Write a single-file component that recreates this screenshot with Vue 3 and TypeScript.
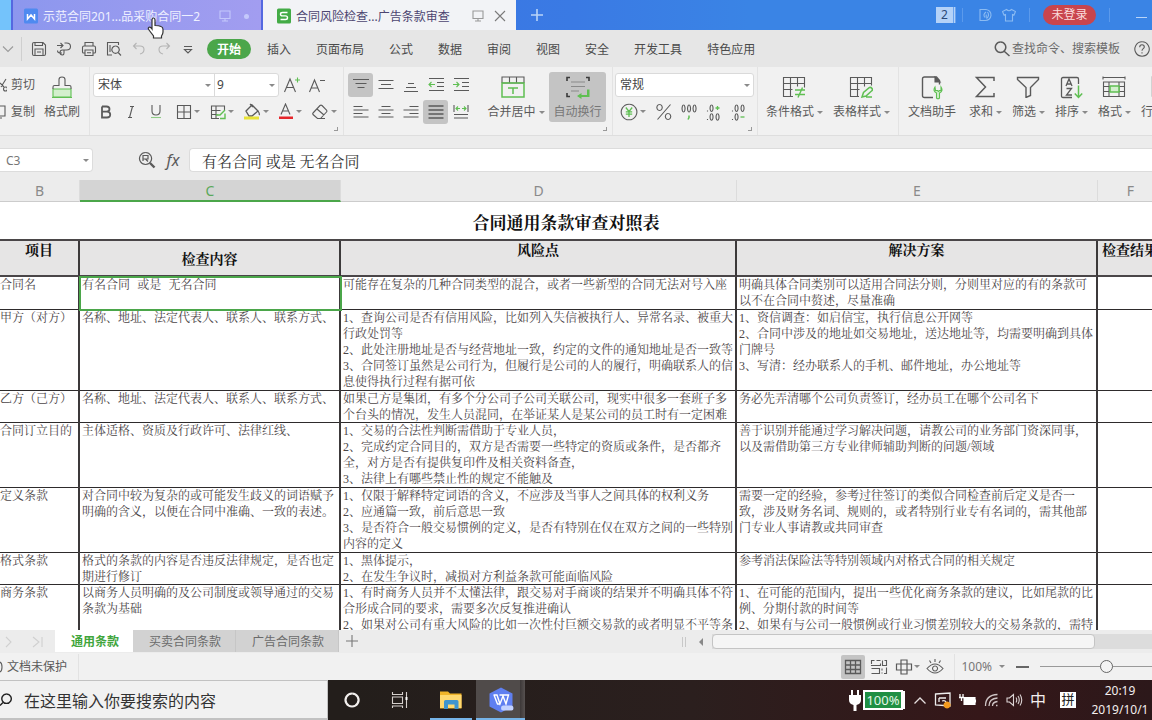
<script setup lang="ts">
import { h, ref } from 'vue'

interface Shape { d: string; s?: string; f?: string; w?: number }
interface IconDef { w: number; h: number; p: Shape[] }

const G = '#5fbf52'
const K = '#5a5a5a'

const icons: Record<string, IconDef> = {
  chevron: { w: 12, h: 8, p: [{ d: 'M1 1.5l5 5 5-5', s: '#9a9a9a' }] },
  save: { w: 16, h: 16, p: [{ d: 'M1.5 3q0-1.500 1.500-1.500h9l2.500 2.500v9q0 1.500-1.500 1.500h-10q-1.500 0-1.500-1.500zM4 1.500v3h7.500v-3M4 14v-6h8v6M6 11h4' }] },
  exportPdf: { w: 16, h: 16, p: [{ d: 'M1 4.500h6M4.500 2l2.500 2.500-2.500 2.500M8.500 2h2q4 0 4 3.500t-4 3.500h-2.500v3M6 12h-2q-2.500 0-2.500-2.500M8 9h-1.500q-2.500 0-2.500 2.500t2.500 2.500q1.500 0 1.500-2' }] },
  print: { w: 16, h: 16, p: [{ d: 'M4 5v-3.500h8v3.500M4 12h-1.500q-1 0-1-1v-4.500q0-1.500 1.500-1.500h10q1.500 0 1.500 1.500v4.500q0 1-1 1h-1.500M4 9h8v5.500h-8zM6 11.700h4' }] },
  preview: { w: 16, h: 16, p: [{ d: 'M6 14h-4.500v-12.500h11v2.500M15 14.500l-2.800-3M4 4v7' }, { d: 'M9.500 5a3.700 3.700 0 1 0 .1 0' }] },
  undo: { w: 16, h: 16, p: [{ d: 'M5.500 2l-3 3 3 3M3 5h6q4 0 4 3.500t-4 4.500', s: '#b4b4b4' }] },
  redo: { w: 16, h: 16, p: [{ d: 'M10.500 2l3 3-3 3M13 5h-6q-4 0-4 3.500t4 4.500', s: '#b4b4b4' }] },
  more: { w: 16, h: 16, p: [{ d: 'M3 5.500h8M3.500 8.500l3.500 3.500 3.500-3.500z' }] },
  search: { w: 16, h: 16, p: [{ d: 'M6.500 1a5.200 5.200 0 1 0 .1 0M10.500 10.500l5 4.500', w: 1.5 }] },
  help: { w: 16, h: 16, p: [{ d: 'M8 .8a7.200 7.200 0 1 0 .1 0M5.700 6.200q0-2.400 2.300-2.400t2.300 2.100c0 1.700-2.300 1.700-2.300 3.800M8 11.300v1.200' }] },
  cut: { w: 7, h: 14, p: [{ d: 'M6 1l-5 8M0 5l4 4M5.500 9a2 2 0 1 1-2 2 2 2 0 0 1 2-2' }] },
  copy: { w: 7, h: 14, p: [{ d: 'M0 1h5v10h-5M0 13h2' }] },
  painter: { w: 22, h: 22, p: [{ d: 'M2 13h18v8h-18zM1 21.500h20', s: G, f: '#d3efcd' }, { d: 'M2 13v-2q0-1.500 1.500-1.500h4.500v-6q0-2.500 3-2.500t3 2.500v6h4.500q1.500 0 1.500 1.500v2' }] },
  aPlus: { w: 18, h: 16, p: [{ d: 'M1.500 15l5.500-13 5.500 13M3.500 10.500h7' }, { d: 'M12 3h5M14.500 .5v5', s: G }] },
  aMinus: { w: 18, h: 16, p: [{ d: 'M1.500 15l5-12 5 12M3.500 11h6M12 3.500h5' }] },
  bold: { w: 14, h: 14, p: [{ d: 'M3 1.500h4.500q3 0 3 2.600t-3 2.600h-4.500M3 6.700h5q3.200 0 3.200 2.900t-3.200 2.900h-5zM3 1.500v11', w: 1.8 }] },
  italic: { w: 14, h: 14, p: [{ d: 'M6 1.500h4M4 12.500h4M8.500 1.500l-3 11' }] },
  underline: { w: 14, h: 15, p: [{ d: 'M3 1v6q0 4 4 4t4-4v-6' }, { d: 'M2 13.500h10', s: '#8ecb85' }] },
  border: { w: 16, h: 16, p: [{ d: 'M1.500 1.500h13v13h-13zM8 1.500v13M1.500 8h13' }] },
  tableFill: { w: 16, h: 16, p: [{ d: 'M9 14.500h-7.500v-12.500h13v4M1.500 6.500h9M1.500 10.500h6M6 2v12.500' }, { d: 'M6 11h4l5-5M10 14.500h5v-5', s: G, w: 1.400 }] },
  bucket: { w: 18, h: 17, p: [{ d: 'M3 8l6-6 6 6-6 5h-3zM7 1l3 3M15 8q2 3 1 4', w: 1.300 }, { d: 'M1 13.500h15v3h-15z', s: 'none', f: '#e8e337' }] },
  fontColor: { w: 16, h: 17, p: [{ d: 'M3 11.500l4.500-10.500 4.500 10.500M4.800 8h5.500' }, { d: 'M1 13.500h14v2.500h-14z', s: 'none', f: '#e5262b' }] },
  eraser: { w: 18, h: 16, p: [{ d: 'M2 9l7-7.500q1-.8 2 0l4.500 4.500q.8 1 0 2l-6 6.500h-3l-4.500-4q-.6-.7 0-1.500zM6 5l7 6M9 14.500h5' }] },
  alTop: { w: 18, h: 14, p: [{ d: 'M1 1.500h16M3.500 5.500h11M5.500 9.500h7' }] },
  alMid: { w: 18, h: 14, p: [{ d: 'M1.500 2.500h15M4 6.500h10M1.500 10.500h15' }] },
  alBot: { w: 18, h: 14, p: [{ d: 'M6 5.500h6M4 9.500h10M2 13.500h14' }] },
  indentL: { w: 18, h: 15, p: [{ d: 'M2 1.500h15M10 5.500h7M10 9.500h7M2 13.500h15' }, { d: 'M8 7.500h-6M4.500 5l-2.500 2.500 2.500 2.500', s: G }] },
  indentR: { w: 18, h: 15, p: [{ d: 'M2 1.500h15M10 5.500h7M10 9.500h7M2 13.500h15' }, { d: 'M1 7.500h6M4.500 5l2.500 2.500-2.500 2.500', s: G }] },
  left: { w: 18, h: 14, p: [{ d: 'M1.500 1.500h9M1.500 5h15M1.500 8.500h9M1.500 12h15' }] },
  center: { w: 18, h: 14, p: [{ d: 'M4.500 1.500h9M1.500 5h15M4.500 8.500h9M1.500 12h15' }] },
  right: { w: 18, h: 14, p: [{ d: 'M7.500 1.500h9M1.500 5h15M7.500 8.500h9M1.500 12h15' }] },
  justify: { w: 18, h: 14, p: [{ d: 'M1.500 1h15M1.500 5h15M1.500 9h15M1.500 13h15', w: 1.300 }] },
  spread: { w: 18, h: 15, p: [{ d: 'M2 1v7M16 1v7M2 10.500h14M2 14h14' }, { d: 'M4 4.500h4M6 2.500l-2 2 2 2M14 4.500h-4M12 2.500l2 2-2 2', s: G }] },
  merge: { w: 24, h: 22, p: [{ d: 'M1 7v-6h22v6M8.500 1v6M15.500 1v6M1 7h22' }, { d: 'M1 7h22v14h-22zM7 12h10M12 12v6', s: G, w: 1.500 }] },
  wrap: { w: 26, h: 24, p: [{ d: 'M5 1.500h-3v3.500M21 1.500h3v3.500M2 17v3.500h3', w: 1.600, s: '#3a3a3a' }, { d: 'M6 6h14M6 10.500h14M6 15h8', s: '#8a8a8a' }, { d: 'M22 13.500h2.500v7.500h-8v2l-4.500-3 4.500-3v2h5.500z', f: G, s: 'none' }] },
  currency: { w: 18, h: 18, p: [{ d: 'M9 1.200a7.800 7.800 0 1 0 .1 0' }, { d: 'M5.800 4.500l3.200 4 3.200-4M9 8.500v5.500M5.800 8.800h6.400M5.800 11.200h6.400', s: G, w: 1.300 }] },
  percent: { w: 18, h: 18, p: [{ d: 'M15.500 1.500l-13 15M4.500 1.500a2.700 3 0 1 0 .1 0M13 10.500a2.700 3 0 1 0 .1 0' }] },
  thousands: { w: 18, h: 18, p: [{ d: 'M3.500 2a1.500 3.500 0 1 0 .1 0M9 2a1.500 3.500 0 1 0 .1 0M14.500 2a1.500 3.500 0 1 0 .1 0' }, { d: 'M9 12.500v2l-1 2', s: G, w: 1.500 }] },
  decUp: { w: 18, h: 18, p: [{ d: 'M2.500 7.500v1M6.500 2a1.500 3.200 0 1 0 .1 0M2.500 16v1M6.500 10.700a1.500 3.200 0 1 0 .1 0M12.500 10.700a1.500 3.200 0 1 0 .1 0' }, { d: 'M10.500 5h4M12.500 3v4', s: G, w: 1.300 }] },
  decDown: { w: 18, h: 18, p: [{ d: 'M2.500 7.500v1M6.500 2a1.500 3.200 0 1 0 .1 0M12.500 2a1.500 3.200 0 1 0 .1 0M2.500 16v1M6.500 10.700a1.500 3.200 0 1 0 .1 0' }, { d: 'M10.500 14h4', s: G, w: 1.300 }] },
  condFmt: { w: 24, h: 22, p: [{ d: 'M11 20.500h-9.500v-19h21v10M1.500 7.500h21M1.500 13.500h9M8.500 1.500v19M15.500 1.500v9' }, { d: 'M13 14h10M13 18.500h10M20.500 11.500l-4.500 10', s: G, w: 1.400 }] },
  tblStyle: { w: 24, h: 22, p: [{ d: 'M10 20.500h-8.500v-19h21v8M1.500 7.500h21M1.500 13.500h9M8.500 1.500v19M15.500 1.500v9' }, { d: 'M13 21l1.500-4.500 6-5q1.500-.5 2.500 1t-.5 2.500l-5.500 5zM17 21h6', s: G, w: 1.500 }] },
  docHelp: { w: 24, h: 24, p: [{ d: 'M13 21.500h-8.500q-2 0-2-2v-16.500q0-2 2-2h12l3 3.500v4', w: 1.400 }, { d: 'M15 1v5h5z', f: K }, { d: 'M15 11q-2.500 4 1.500 6v5q1.500 1.500 3 0v-5q4-2 1.500-6v3.500h-1.500l-1 1-1-1h-2z', s: G, f: '#d3efcd' }] },
  sum: { w: 22, h: 22, p: [{ d: 'M20 5v-3.500h-17.500l9 9.500-9 9.500h17.500v-3.500', w: 1.500 }] },
  filter: { w: 24, h: 22, p: [{ d: 'M1.500 1.500h21v2l-8 8v8l-4.500 2v-10l-8.500-8z', w: 1.400 }] },
  sort: { w: 24, h: 23, p: [{ d: 'M13 21.500h-9q-1.500 0-1.500-1.500v-17q0-1.500 1.500-1.500h14q1.500 0 1.500 1.500v5M7 10l3-7 3 7M8 8h4M7.500 12.500h5l-5 6.500h5.500', w: 1.300 }, { d: 'M19.500 9.500v12M15.800 17.500l3.700 4 3.700-4', s: G, w: 1.500 }] },
  format: { w: 24, h: 22, p: [{ d: 'M1 1.500h22M1 .5v3M23 .5v3M1.500 6h21v14.500h-21zM1.500 10.500h21M1.500 15.500h21M7 6v14M17 6v14' }, { d: 'M8 10h9v6h-9z', s: G, f: '#d3efcd', w: 1.500 }] },
  rows: { w: 24, h: 22, p: [{ d: 'M1.500 1h20v19h-20zM1.500 7h20M8 1v19', w: 1.400 }] },
  goTo: { w: 18, h: 18, p: [{ d: 'M7.500 1.500a6 6 0 1 0 .1 0M5 10v-5.500h5v3.500h-5M7.500 8l2.500 2.500', w: 1.200 }, { d: 'M12 12l4.500 4.500', w: 2.400 }] },
  monitor: { w: 14, h: 12, p: [{ d: 'M2 1h10v7.500h-10zM7 8.500v2.500M4 11h6', s: 'currentColor' }] },
  close: { w: 12, h: 12, p: [{ d: 'M1 1l10 10M11 1l-10 10', s: '#7a7a7a' }] },
  plusWhite: { w: 12, h: 12, p: [{ d: 'M6 0v12M0 6h12', s: '#b9d4f8', w: 1.600 }] },
  wTab: { w: 14, h: 16, p: [{ d: 'M1.500 .5h11q1.500 0 1.500 1.500v12q0 1.500-1.500 1.500h-11q-1.500 0-1.500-1.500v-12q0-1.500 1.500-1.500z', f: '#4f8af0', s: 'none' }, { d: 'M3.500 6v5l3.500-4 3.500 4v-5', s: '#fff', w: 1.500 }] },
  sTab: { w: 14, h: 16, p: [{ d: 'M1.500 .5h11q1.500 0 1.500 1.500v12q0 1.500-1.500 1.500h-11q-1.500 0-1.500-1.500v-12q0-1.500 1.500-1.500z', f: '#43ab46', s: 'none' }, { d: 'M10.500 4.500h-5q-2 0-2 1.700t2 1.700h3q2 0 2 1.800t-2 1.800h-5', s: '#fff', w: 1.400 }] },
  task: { w: 14, h: 14, p: [{ d: 'M8 1.500h-6v11h5M8 1.500a5.500 5.500 0 1 1-1 11M8 4q-3.500 2.500-1 5.500M9.500 4q2.500 3.500-1 6.500M8.200 6.500v3', s: '#8bbbf2' }] },
  shirt: { w: 14, h: 14, p: [{ d: 'M4.500 1.500q2.500 2.500 5 0l4 2-1.500 3.500-1.500-.5v6.500h-7v-6.500l-1.500.5-1.500-3.500z', s: '#8bbbf2' }] },
  normalView: { w: 18, h: 16, p: [{ d: 'M1.500 1.500h15v13h-15zM1.500 6h15M1.500 10.500h15M6.500 1.500v13M11.500 1.500v13', w: 1.300 }] },
  pageView: { w: 18, h: 16, p: [{ d: 'M1.500 5v-3.500h3M6.500 1.500h4M1.500 7v-.5h9v-2M1.500 9.500h8v5h-8M12.500 1.500v5h4v-5h-2M16.500 8.500v6h-2.500M12 9.500v2M12 13.500v1' }] },
  splitView: { w: 18, h: 16, p: [{ d: 'M6 1h6v14h-6zM1.500 5h15v6h-15z', w: 1.200 }] },
  eye: { w: 18, h: 17, p: [{ d: 'M1 10.500q8-9 16 0-8 9-16 0zM9 8a2.500 2.500 0 1 0 .1 0M9 1v3M3.500 2.500l1.500 2.500M14.500 2.500l-1.500 2.500' }] },
  navNext: { w: 8, h: 12, p: [{ d: 'M1 1l5 5-5 5', s: '#d0d0d0' }] },
  navLast: { w: 12, h: 12, p: [{ d: 'M1 1l6 5-6 5M10 1v10', s: '#d0d0d0' }] },
  addSheet: { w: 14, h: 14, p: [{ d: 'M7 1v12M1 7h12', s: '#777' }] },
  shield: { w: 3, h: 12, p: [{ d: 'M0 1q2 1 2 5t-2 5' }] },
  taskSearch: { w: 12, h: 16, p: [{ d: 'M6.500 2a4.700 4.700 0 1 0 .1 0M3 10.500l-3 3', s: '#222', w: 1.400 }] },
  cortana: { w: 18, h: 18, p: [{ d: 'M9 2.500a6.500 6.500 0 1 0 .1 0', s: '#f3f0ee', w: 2.200 }] },
  taskView: { w: 18, h: 16, p: [{ d: 'M1.500 0v2.500h10v-2.500M1.500 5h10v6.500h-10zM1.500 16v-2h10v2M15.500 0v16', s: '#d6d0cd' }, { d: 'M14.500 5h2v3h-2z', s: 'none', f: '#fff' }] },
  folder: { w: 22, h: 20, p: [{ d: 'M0 1.500h8l2 2h11.500v15h-21.500z', s: 'none', f: '#f0b429' }, { d: 'M0 5h21.500v13h-21.500z', s: 'none', f: '#ffd970' }, { d: 'M4 19v-7.500q0-1.500 1.500-1.500h11.500q1.500 0 1.500 1.500v7.500h-4v-4.500h-6.500v4.500z', s: 'none', f: '#3f95cf' }] },
  wps: { w: 26, h: 26, p: [{ d: 'M13 .5l11.500 6v13l-11.500 6-11.500-6v-13z', s: 'none', f: '#5f7ff0' }, { d: 'M5.500 8h3.500l3 9 3-8 3 8 2.500-9h-9M6 8l3.500 9h2', s: '#fff', w: 1.400 }, { d: 'M15 18.500h8.500q2 0 2 2.500t-2 2.500h-8.500q-2 0-2-2.500t2-2.500z', s: 'none', f: '#c3d2ff' }] },
  plug: { w: 14, h: 22, p: [{ d: 'M4 1v6M10 1v6', s: '#fff', w: 2 }, { d: 'M1 6h12v5q0 4-4.500 5v6h-3v-6q-4.500-1-4.500-5z', s: 'none', f: '#fff' }] },
  trayUp: { w: 14, h: 9, p: [{ d: 'M1.500 7.500l5.500-5.500 5.500 5.500', s: '#e5dede', w: 1.300 }] },
  trayApp: { w: 18, h: 17, p: [{ d: 'M1.500 2l14.500-1v13l-14.500-1zM5 6h7M5 6v4M8 9q3-1 4 1', s: '#eee', w: 1.300 }, { d: 'M13 9.500a3.500 3.500 0 1 0 .1 0', s: 'none', f: '#f39a1f' }] },
  trayBat: { w: 18, h: 12, p: [{ d: 'M5 3.500h11v7h-11zM16.500 5.500v3', s: '#fff', f: '#fff' }, { d: 'M1 0v3M4 0v3M0 3.500h5M2.500 4v3', s: '#fff', w: 1.300 }] },
  wifi: { w: 15, h: 14, p: [{ d: 'M1.500 13q0-11 12-11.500M5 13q0-7.500 8.500-8M8.500 13q0-4 5-4.500M12 12.500h1.500', s: '#cfc5c5', w: 1.300 }] },
  volume: { w: 17, h: 14, p: [{ d: 'M1 5h2.500l4-3.500v11l-4-3.500h-2.500zM10 4.500q1.500 2.500 0 5M12 3q2.500 4 0 8M14 1.500q3.500 5.500 0 11', s: '#dcd4d4' }] },
  cursor: { w: 18, h: 22, p: [{ d: 'M5 12v-9q0-2 1.500-2t1.500 2v5.500q4 .2 6 1 2 .5 2 3v2.500q0 2-1.500 4v2h-8v-2l-4.500-6q-1.500-2 0-2.700t3 1.700z', f: '#fff', s: '#333', w: 1.200 }] },
}

const Icon = (props: { name: string }) => {
  const def = icons[props.name]
  return h('svg', { width: def.w, height: def.h, viewBox: `0 0 ${def.w} ${def.h}`, 'aria-hidden': 'true', style: { flex: 'none', display: 'block' } },
    def.p.map((p) => h('path', { d: p.d, fill: p.f ?? 'none', stroke: p.s ?? K, 'stroke-width': p.w ?? 1.1 })))
}
Icon.props = ['name']

const quick = [
  ['save', '保存'], ['exportPdf', '输出为PDF'], ['print', '打印'], ['preview', '打印预览'],
  ['undo', '撤销'], ['redo', '恢复'], ['more', '自定义'],
]
const menus = ['插入', '页面布局', '公式', '数据', '审阅', '视图', '安全', '开发工具', '特色应用']
const plainFmt = [['bold', '加粗'], ['italic', '倾斜'], ['underline', '下划线']]
const dropFmt = [['border', '边框'], ['tableFill', '绘制边框'], ['bucket', '填充颜色'], ['fontColor', '字体颜色'], ['eraser', '清除']]
const alignTop = ['alTop', 'alMid', 'alBot', 'indentL', 'indentR']
const alignBottom = ['left', 'center', 'right', 'justify', 'spread']
const numFmt = ['percent', 'thousands', 'decUp', 'decDown']
const styleBtns = [['condFmt', '条件格式'], ['tblStyle', '表格样式']]
const editBtns = [['sum', '求和'], ['filter', '筛选'], ['sort', '排序'], ['format', '格式'], ['rows', '行和列']]

const columns = [
  { id: 'B', w: 80 }, { id: 'C', w: 261 }, { id: 'D', w: 396 }, { id: 'E', w: 361 }, { id: 'F', w: 66 },
]
const heads = ['项目', '检查内容', '风险点', '解决方案', '检查结果']
const formula = ref('有名合同 或是 无名合同')

interface Row { h: number; cells: string[][] }
const rows: Row[] = [
  { h: 33, cells: [['合同名'], ['有名合同 或是 无名合同'],
    ['可能存在复杂的几种合同类型的混合，或者一些新型的合同无法对号入座'],
    ['明确具体合同类别可以适用合同法分则，分则里对应的有的条款可', '以不在合同中赘述，尽量准确']] },
  { h: 81, cells: [['甲方（对方）'], ['名称、地址、法定代表人、联系人、联系方式、'],
    ['1、查询公司是否有信用风险，比如列入失信被执行人、异常名录、被重大', '行政处罚等', '2、此处注册地址是否与经营地址一致，约定的文件的通知地址是否一致等', '3、合同签订虽然是公司行为，但履行是公司的人的履行，明确联系人的信', '息使得执行过程有据可依'],
    ['1、资信调查：如启信宝，执行信息公开网等', '2、合同中涉及的地址如交易地址，送达地址等，均需要明确到具体', '门牌号', '3、写清：经办联系人的手机、邮件地址，办公地址等']] },
  { h: 32, cells: [['乙方（己方）'], ['名称、地址、法定代表人、联系人、联系方式、'],
    ['如果己方是集团，有多个分公司子公司关联公司，现实中很多一套班子多', '个台头的情况，发生人员混同，在举证某人是某公司的员工时有一定困难'],
    ['务必先弄清哪个公司负责签订，经办员工在哪个公司名下']] },
  { h: 65, cells: [['合同订立目的'], ['主体适格、资质及行政许可、法律红线、'],
    ['1、交易的合法性判断需借助于专业人员，', '2、完成约定合同目的，双方是否需要一些特定的资质或条件，是否都齐', '全，对方是否有提供复印件及相关资料备查，', '3、法律上有哪些禁止性的规定不能触及'],
    ['善于识别并能通过学习解决问题，请教公司的业务部门资深同事，', '以及需借助第三方专业律师辅助判断的问题/领域']] },
  { h: 65, cells: [['定义条款'], ['对合同中较为复杂的或可能发生歧义的词语赋予', '明确的含义，以便在合同中准确、一致的表述。'],
    ['1、仅限于解释特定词语的含义，不应涉及当事人之间具体的权利义务', '2、应通篇一致，前后意思一致', '3、是否符合一般交易惯例的定义，是否有特别在仅在双方之间的一些特别', '内容的定义'],
    ['需要一定的经验，参考过往签订的类似合同检查前后定义是否一', '致，涉及财务名词、规则的，或者特别行业专有名词的，需其他部', '门专业人事请教或共同审查']] },
  { h: 32, cells: [['格式条款'], ['格式的条款的内容是否违反法律规定，是否也定', '期进行修订'],
    ['1、黑体提示，', '2、在发生争议时，减损对方利益条款可能面临风险'],
    ['参考消法保险法等特别领域内对格式合同的相关规定']] },
  { h: 65, cells: [['商务条款'], ['以商务人员明确的及公司制度或领导通过的交易', '条款为基础'],
    ['1、有时商务人员并不太懂法律，跟交易对手商谈的结果并不明确具体不符', '合形成合同的要求，需要多次反复推进确认', '2、如果对公司有重大风险的比如一次性付巨额交易款的或者明显不平等条'],
    ['1、在可能的范围内，提出一些优化商务条款的建议，比如尾款的比', '例、分期付款的时间等', '2、如果有与公司一般惯例或行业习惯差别较大的交易条款的，需特']] },
]
</script>

<template>
  <div class="app">
    <header class="titlebar">
      <div class="home-tab"></div>
      <div class="doc-tab">
        <Icon name="wTab" /><span class="doc-name">示范合同201...品采购合同一2</span>
        <Icon name="monitor" /><i class="dot"></i>
      </div>
      <div class="doc-tab active">
        <Icon name="sTab" /><span class="doc-name">合同风险检查...广告条款审查</span>
        <Icon name="monitor" /><button class="bare" aria-label="关闭"><Icon name="close" /></button>
      </div>
      <button class="bare new-tab" aria-label="新建"><Icon name="plusWhite" /></button>
      <div class="title-right">
        <span class="count">2</span><i class="tsep"></i>
        <button class="bare" aria-label="待办"><Icon name="task" /></button>
        <button class="bare" aria-label="皮肤"><Icon name="shirt" /></button>
        <i class="tsep wide"></i>
        <button class="login">未登录</button>
        <i class="tsep wide"></i>
        <button class="bare minimize" aria-label="最小化"></button>
      </div>
      <div class="cursor"><Icon name="cursor" /></div>
    </header>

    <nav class="menubar">
      <button class="bare file-chev" aria-label="文件"><Icon name="chevron" /></button>
      <div class="quick">
        <button v-for="q in quick" :key="q[0]" class="bare" :aria-label="q[1]"><Icon :name="q[0]" /></button>
      </div>
      <button class="start">开始</button>
      <div class="menus"><button v-for="m in menus" :key="m" class="bare">{{ m }}</button></div>
      <button class="bare find"><Icon name="search" />查找命令、搜索模板</button>
      <button class="bare help" aria-label="帮助"><Icon name="help" /></button>
    </nav>

    <section class="ribbon">
      <div class="group clip">
        <div class="stack">
          <button class="bare clip-btn"><Icon name="cut" />剪切</button>
          <button class="bare clip-btn"><Icon name="copy" />复制</button>
        </div>
        <button class="bare big"><Icon name="painter" /><span>格式刷</span></button>
      </div>
      <div class="group font corner">
        <div class="line">
          <div class="combo">
            <span class="pick family"><select aria-label="字体"><option>宋体</option></select></span>
            <span class="pick size"><select aria-label="字号"><option>9</option></select></span>
          </div>
          <button class="bare tool" aria-label="增大字号"><Icon name="aPlus" /></button>
          <button class="bare tool" aria-label="减小字号"><Icon name="aMinus" /></button>
        </div>
        <div class="line">
          <button v-for="b in plainFmt" :key="b[0]" class="bare tool" :aria-label="b[1]"><Icon :name="b[0]" /></button>
          <button v-for="b in dropFmt" :key="b[0]" class="bare drop" :aria-label="b[1]"><Icon :name="b[0]" /><i class="caret"></i></button>
        </div>
      </div>
      <div class="group align corner">
        <div class="stack">
          <div class="line"><button v-for="a in alignTop" :key="a" class="bare tool" :class="{ on: a === 'alTop' }" :aria-label="a"><Icon :name="a" /></button></div>
          <div class="line"><button v-for="a in alignBottom" :key="a" class="bare tool" :class="{ on: a === 'justify' }" :aria-label="a"><Icon :name="a" /></button></div>
        </div>
        <button class="bare big merge"><Icon name="merge" /><span>合并居中<i class="caret"></i></span></button>
        <button class="bare big wrap on"><Icon name="wrap" /><span>自动换行</span></button>
      </div>
      <div class="group number corner">
        <div class="line"><span class="pick general"><select aria-label="数字格式"><option>常规</option></select></span></div>
        <div class="line">
          <button class="bare drop" aria-label="货币"><Icon name="currency" /><i class="caret"></i></button>
          <button v-for="n in numFmt" :key="n" class="bare tool" :aria-label="n"><Icon :name="n" /></button>
        </div>
      </div>
      <div class="group styles">
        <button v-for="s in styleBtns" :key="s[0]" class="bare big"><Icon :name="s[0]" /><span>{{ s[1] }}<i class="caret"></i></span></button>
      </div>
      <div class="group edit">
        <button class="bare big helper"><Icon name="docHelp" /><span>文档助手</span></button>
        <button v-for="s in editBtns" :key="s[0]" class="bare big"><Icon :name="s[0]" /><span>{{ s[1] }}<i class="caret"></i></span></button>
      </div>
    </section>

    <section class="formula-bar">
      <span class="pick name-box"><input value="C3" aria-label="名称框" /></span>
      <button class="bare goto" aria-label="浏览公式结果"><Icon name="goTo" /></button>
      <button class="bare fx" aria-label="插入函数">fx</button>
      <input v-model="formula" class="formula" aria-label="编辑栏" />
    </section>

    <main class="sheet">
      <table>
        <colgroup><col v-for="c in columns" :key="c.id" :style="{ width: c.w + 'px' }" /></colgroup>
        <thead>
          <tr class="letters"><th v-for="c in columns" :key="c.id" :class="{ picked: c.id === 'C' }">{{ c.id }}</th></tr>
        </thead>
        <tbody>
          <tr class="title"><td colspan="5">合同通用条款审查对照表</td></tr>
          <tr class="heads"><td v-for="(t, i) in heads" :key="t" :class="{ low: i === 1 }">{{ t }}</td></tr>
          <tr v-for="(r, ri) in rows" :key="ri" class="data" :style="{ height: r.h + 'px' }">
            <td v-for="(c, ci) in r.cells" :key="ci" :class="{ selected: ri === 0 && ci === 1 }">
              <div v-for="(line, li) in c" :key="li">{{ line }}</div>
            </td>
            <td></td>
          </tr>
        </tbody>
      </table>
    </main>

    <div class="sheet-tabs">
      <div class="nav"><Icon name="navNext" /><Icon name="navLast" /></div>
      <button class="bare stab current">通用条款</button>
      <button class="bare stab">买卖合同条款</button>
      <button class="bare stab">广告合同条款</button>
      <button class="bare add" aria-label="新建工作表"><Icon name="addSheet" /></button>
      <div class="scroll"><i class="grip"></i><i class="arrow"></i><div class="track"><div class="thumb"></div></div></div>
    </div>

    <footer class="status">
      <span class="protect"><Icon name="shield" />文档未保护</span>
      <div class="views">
        <button class="bare view on" aria-label="普通视图"><Icon name="normalView" /></button>
        <button class="bare view" aria-label="分页预览"><Icon name="pageView" /></button>
        <button class="bare view" aria-label="阅读模式"><Icon name="splitView" /><i class="caret"></i></button>
        <button class="bare view" aria-label="护眼模式"><Icon name="eye" /></button>
      </div>
      <button class="bare zoom">100%<i class="caret"></i></button>
      <button class="bare minus" aria-label="缩小"></button>
      <input class="slider" type="range" min="0" max="100" value="50" aria-label="缩放" />
    </footer>

    <div class="taskbar">
      <label class="task-search"><Icon name="taskSearch" /><input placeholder="在这里输入你要搜索的内容" aria-label="搜索" /></label>
      <button class="bare tb" aria-label="Cortana"><Icon name="cortana" /></button>
      <button class="bare tb" aria-label="任务视图"><Icon name="taskView" /></button>
      <button class="bare tb running" aria-label="文件资源管理器"><Icon name="folder" /></button>
      <button class="bare tb running front" aria-label="WPS"><Icon name="wps" /></button>
      <div class="tray">
        <Icon name="plug" /><span class="battery">100%</span>
        <Icon name="trayUp" /><Icon name="trayApp" /><Icon name="trayBat" /><Icon name="wifi" /><Icon name="volume" />
        <span class="ime">中</span><span class="pinyin">拼</span>
      </div>
      <div class="clock"><span>20:19</span><span>2019/10/1</span></div>
    </div>
  </div>
</template>

<style>
body { margin: 0; overflow: hidden; }
</style>

<style scoped>
.app { height: 100vh; display: flex; flex-direction: column; overflow: hidden; font: 12px/16px "Noto Sans", "Noto Sans CJK SC", sans-serif; color: #5a5a5a; background: #fff; }
.app > * { flex: none; }
.bare { border: 0; padding: 0; margin: 0; background: none; font: inherit; color: inherit; display: flex; align-items: center; justify-content: center; white-space: nowrap; flex: none; }
.caret { display: inline-block; border: 3px solid transparent; border-top-color: #8a8a8a; border-bottom: 0; flex: none; }

.titlebar { position: relative; height: 30px; display: flex; background: linear-gradient(90deg, #3b6fe0, #3a7ae4 50%, #3a84e5 65%); }
.home-tab { width: 11px; background: #74c3fb; }
.doc-tab { width: 252px; box-sizing: border-box; display: flex; align-items: center; padding: 2px 12px 0 11px; background: linear-gradient(90deg, #8c97ee, #a29df0); border: solid #5468e0; border-width: 0 2px 0 2px; color: #c4c8fb; }
.doc-name { margin: 2px auto 0 5px; color: #eef0ff; white-space: nowrap; }
.dot { width: 5px; height: 5px; border-radius: 3px; background: #c4c8fb; margin: 0 0 0 12px; }
.doc-tab.active { background: #f2f3f6; border: 0; width: 253px; color: #999; padding-left: 14px; padding-right: 10px; }
.active .doc-name { color: #4c4570; }
.active .bare { margin-left: 9px; }
.new-tab { width: 42px; }
.title-right { margin-left: auto; display: flex; align-items: center; }
.count { width: 17px; height: 16px; background: #b4d2f8; border-right: 3px double #6aa3ee; color: #2c4a78; text-align: center; margin-right: 6px; }
.tsep { width: 1px; height: 14px; background: #5b9aec; margin-right: 15px; }
.title-right .bare + .bare { margin-left: 10px; }
.tsep.wide { margin: 0 13px 0 13px; }
.login { border: 0; width: 53px; height: 20px; border-radius: 10px; background: #c9454d; color: #fbdcdc; font: inherit; padding: 0; }
.title-right .minimize { width: 11px; height: 1px; background: #b9d4f8; margin: 4px 5px 0 13px; }
.cursor { position: absolute; left: 147px; top: 17px; z-index: 2; }

.menubar { height: 37px; display: flex; align-items: center; background: #e6e6e6; }
.file-chev { width: 22px; height: 24px; padding-right: 6px; box-sizing: border-box; border-right: 1px solid #cfcfcf; }
.quick { display: flex; gap: 9px; margin-left: 9px; }
.start { margin-left: 10px; width: 44px; height: 20px; border: 0; border-radius: 10px; padding: 0; background: #4ba64a; color: #fff; font: bold 12px/20px "Noto Sans CJK SC", sans-serif; }
.menus { display: flex; gap: 25px; margin: 2px 0 0 16px; color: #4a4a4a; }
.find { margin-left: auto; gap: 2px; color: #6a6a6a; }
.help { margin: 0 2px 0 14px; }

.ribbon { height: 69px; display: flex; background: #f1f1f1; border-bottom: 1px solid #dedede; box-sizing: border-box; overflow: hidden; }
.group { display: flex; flex: none; border-right: 1px solid #e3e3e3; box-sizing: border-box; padding-top: 5px; position: relative; }
.corner::after { content: ""; position: absolute; right: 5px; bottom: 4px; width: 3px; height: 3px; border: solid #999; border-width: 0 1px 1px 0; }
.stack, .font, .number { display: flex; flex-direction: column; gap: 2px; }
.line { display: flex; height: 25px; align-items: center; }
.clip { width: 90px; gap: 9px; }
.clip-btn { height: 25px; gap: 4px; }
.big { flex-direction: column; justify-content: flex-start; height: 50px; padding-top: 4px; box-sizing: border-box; border-radius: 3px; }
.big span { margin-top: auto; line-height: 20px; display: flex; align-items: center; gap: 3px; }
.font { width: 254px; padding-left: 3px; }
.combo { display: flex; width: 186px; height: 24px; box-sizing: border-box; background: #fff; border: 1px solid #dadada; border-radius: 3px; }
.pick { position: relative; display: flex; align-items: center; }
.pick::after { content: ""; position: absolute; right: 3px; top: 10px; border: 3px solid transparent; border-top-color: #8a8a8a; border-bottom: 0; pointer-events: none; }
.pick select, .pick input { appearance: none; border: 0; background: none; font: inherit; color: #444; padding: 0 0 0 4px; width: 100%; height: 100%; outline: 0; box-sizing: border-box; }
.family { flex: 1; border-right: 1px solid #dadada; }
.size { width: 63px; }
.size select { padding-left: 2px; }
.tool { width: 25px; height: 24px; border-radius: 3px; }
.tool + .drop { margin-left: 3px; }
.drop { width: 34px; height: 24px; gap: 2px; }
.on { background: #c4c4c4; }
.align { width: 269px; padding-left: 4px; }
.merge { width: 56px; margin-left: 12px; }
.merge .caret { margin-right: -6px; }
.wrap { width: 57px; margin-left: 8px; color: #777; }
.number { width: 145px; padding-left: 2px; }
.general { width: 139px; height: 24px; box-sizing: border-box; background: #fff; border: 1px solid #dadada; border-radius: 3px; }
.number .drop { width: 36px; }
.styles { width: 141px; padding-left: 8px; gap: 10px; }
.styles .big svg, .edit .big svg { margin-right: 1px; }
.edit { padding-left: 9px; gap: 10px; border: 0; }
.edit .helper { margin-right: 3px; }

.formula-bar { height: 44px; display: flex; align-items: center; background: #ececec; box-sizing: border-box; padding-top: 4px; }
.name-box { width: 93px; height: 24px; box-sizing: border-box; background: #fff; border: 1px solid #dcdcdc; border-left: 0; border-radius: 0 4px 4px 0; }
.name-box input { padding-left: 6px; color: #777; }
.goto { margin-left: 45px; }
.fx { margin-left: 9px; width: 16px; font: italic 16px/20px "Noto Sans", sans-serif; }
.formula { flex: 1; min-width: 0; height: 24px; box-sizing: border-box; margin-left: 8px; padding: 0 12px; border: 1px solid #dcdcdc; border-right: 0; border-radius: 4px 0 0 4px; background: #fff; font: 15px/20px "Liberation Serif", "Noto Serif CJK SC", "Noto Sans CJK SC", serif; color: #333; outline: 0; }

.app .sheet { flex: 1 1 0; min-height: 0; overflow: hidden; background: linear-gradient(#ececec 21px, #ccc 21px, #ccc 22px, #fff 22px); }
table { border-collapse: separate; border-spacing: 0; table-layout: fixed; width: 1164px; }
td { padding: 0; vertical-align: top; }
.letters th { height: 22px; box-sizing: border-box; padding: 0; background: #ececec; border-bottom: 1px solid #ccc; border-right: 1px solid #dcdcdc; font-weight: 400; font-size: 14px; line-height: 20px; color: #8a8a8a; }
.letters th.picked { background: #d4d4d4; color: #5aa85a; border-bottom: 2px solid #4ba64a; line-height: 19px; }
.title td { height: 39px; padding: 6px 32px 0 0; box-sizing: border-box; border-bottom: 2px solid #4a4648; text-align: center; vertical-align: middle; color: #111; font: bold 17px/24px "Liberation Serif", "Noto Serif CJK SC", "Noto Sans CJK SC", serif; }
.heads td { height: 36px; box-sizing: border-box; background: #e6e5e5; border-bottom: 2px solid #4a4648; border-right: 2px solid #3c393a; text-align: center; white-space: nowrap; color: #111; font: bold 14px/20px "Liberation Serif", "Noto Serif CJK SC", "Noto Sans CJK SC", serif; }
.heads td.low { vertical-align: bottom; line-height: 30px; }
.data td { box-shadow: inset 0 -1px #2e2b2c; border-right: 2px solid #3c393a; padding-left: 2px; white-space: nowrap; color: #4c4648; font: 12px/16px "Liberation Serif", "Noto Serif CJK SC", "Noto Sans CJK SC", serif; }
.data td:first-child { padding-left: 0; }
.data td.selected { outline: 2px solid #4ba64a; outline-offset: -1px; box-shadow: none; padding-top: 1px; font-family: "Liberation Mono", "Noto Serif CJK SC", "Noto Sans CJK SC", monospace; }

.sheet-tabs { height: 23px; display: flex; background: #ececec; }
.nav { width: 55px; display: flex; align-items: center; gap: 19px; padding-left: 5px; box-sizing: border-box; }
.stab { width: 103px; height: 22px; background: #d2d2d2; border-right: 1px solid #c6c6c6; box-sizing: border-box; color: #6a6a6a; padding: 2px 0 0 2px; }
.stab.current { width: 78px; background: #fff; color: #3fa53c; font-weight: 700; border: 0; }
.add { width: 26px; height: 21px; }
.scroll { margin-left: auto; width: 470px; display: flex; align-items: center; }
.grip { width: 2px; height: 10px; border: solid #c8c8c8; border-width: 0 1px; margin-right: 6px; }
.arrow { border: 4px solid transparent; border-right-color: #888; border-left: 0; padding: 0; margin: 0 9px 0 7px; }
.track { flex: 1; height: 15px; background: #dcdcdc; }
.thumb { width: 87%; height: 15px; box-sizing: border-box; background: #f5f5f5; border: 1px solid #c4c4c4; border-radius: 4px; }

.status { height: 27px; display: flex; align-items: center; background: #f1f1f1; }
.protect { display: flex; align-items: center; gap: 4px; width: 78px; height: 26px; border-right: 1px solid #e2e2e2; }
.views { margin-left: auto; display: flex; align-items: center; height: 26px; padding-right: 5px; border-right: 1px solid #e2e2e2; }
.view { width: 28px; height: 24px; }
.view.on { width: 24px; border-radius: 2px; }
.view .caret { margin-left: 1px; }
.zoom { margin-left: 6px; gap: 7px; color: #777; }
.minus { width: 13px; height: 2px; background: #666; margin: 0 11px; }
.slider { appearance: none; background: none; width: 132px; height: 20px; margin: 0 -20px 0 0; flex: none; }
.slider::-webkit-slider-runnable-track { height: 1px; background: #999; }
.slider::-webkit-slider-thumb { appearance: none; width: 13px; height: 13px; box-sizing: border-box; margin-top: -6px; border: 1px solid #666; border-radius: 50%; background: #f4f4f4; }

.taskbar { height: 40px; display: flex; align-items: stretch; background: linear-gradient(90deg, #231e1b 30%, #2b1f1e 60%, #351719 85%, #2c181a); color: #f3eeee; }
.task-search { width: 328px; box-sizing: border-box; border: solid #c2c2c2; border-width: 1px 1px 2px 0; background: #f1f1f1; display: flex; align-items: center; }
.task-search input { flex: 1; min-width: 0; border: 0; background: none; outline: 0; padding: 0 0 0 12px; font: 16px/24px "Noto Sans CJK SC", sans-serif; }
.task-search input::placeholder { color: #333; opacity: 1; }
.tb { width: 48px; box-sizing: border-box; }
.running { border: solid #76b4e8; border-width: 0 0 2px; width: 42px; margin-left: 6px; padding-top: 2px; }
.front { background: linear-gradient(90deg, #504b4a 90%, #3d3838 90%, #575150); width: 49px; margin-left: 4px; }
.tray { margin-left: auto; display: flex; align-items: center; gap: 7px; }
.battery { width: 40px; height: 20px; box-sizing: border-box; border: 2px solid #fff; background: #1f8f43; color: #e4f7e8; text-align: center; font-size: 13px; box-shadow: 3px 0 0 -1px #fff; margin-left: -6px; margin-right: 3px; }
.ime { font-size: 16px; line-height: 20px; }
.pinyin { width: 16px; height: 16px; background: #fff; color: #222; text-align: center; font-size: 13px; line-height: 15px; margin: 0 12px 0 7px; }
.clock { width: 64px; display: flex; flex-direction: column; align-items: center; justify-content: center; line-height: 19px; font-size: 12px; white-space: nowrap; }
</style>
